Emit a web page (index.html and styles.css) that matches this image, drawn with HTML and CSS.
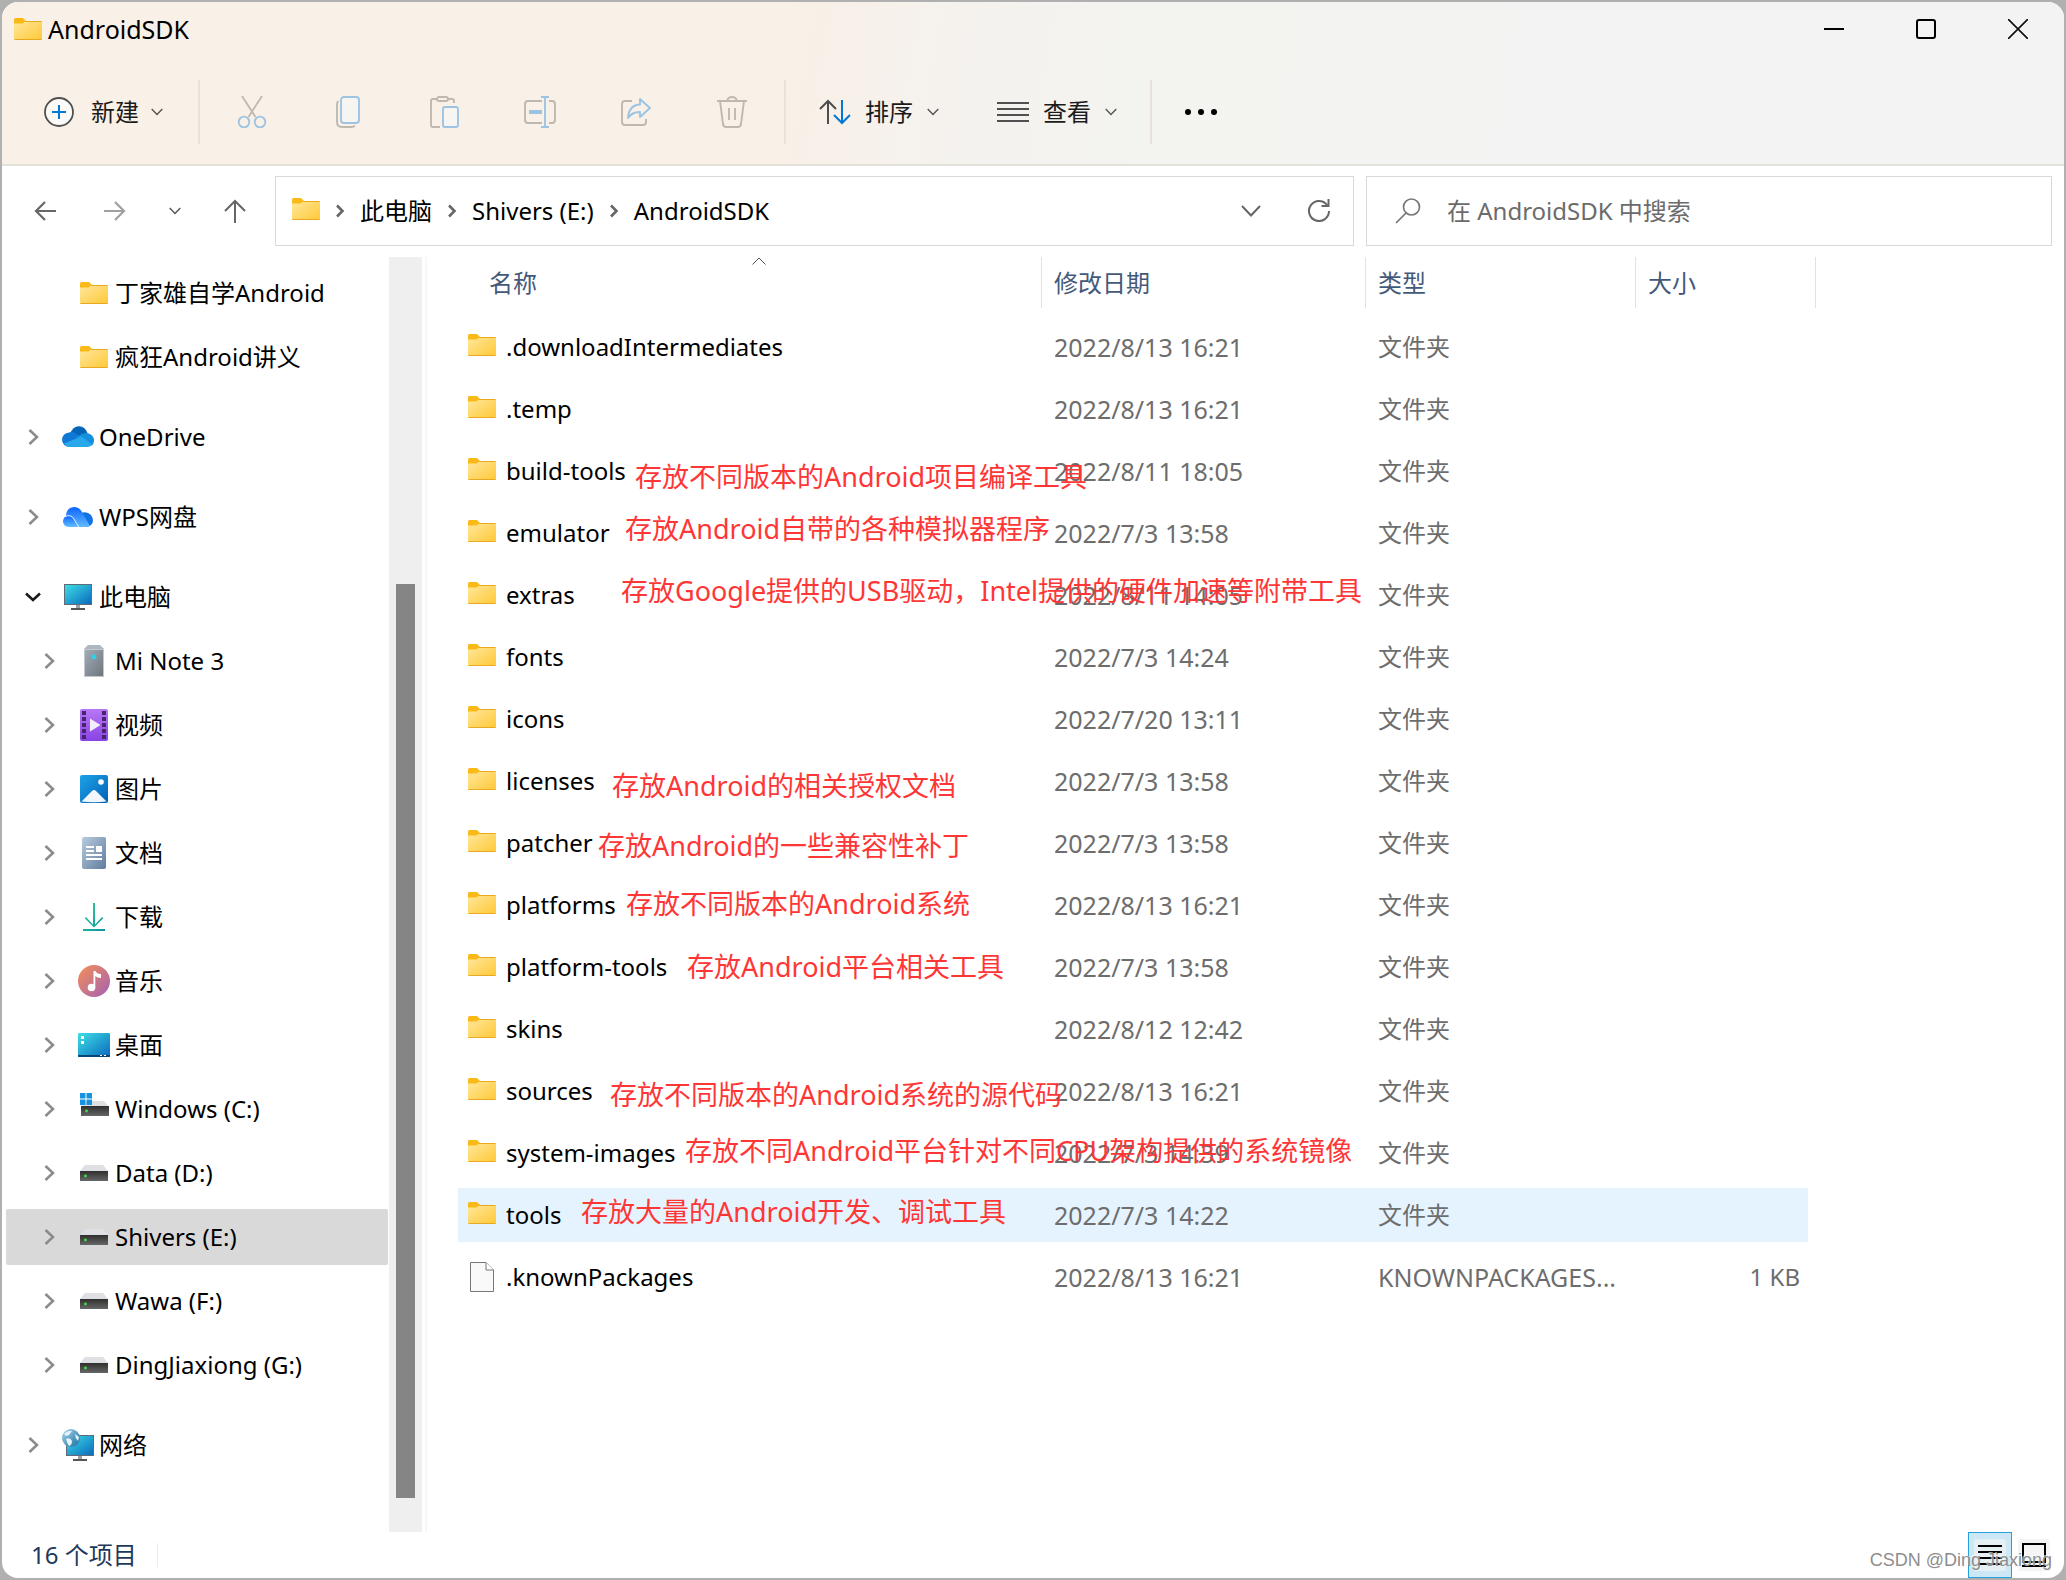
FILE: index.html
```html
<!DOCTYPE html>
<html lang="zh-CN">
<head>
<meta charset="utf-8">
<title>AndroidSDK</title>
<link rel="stylesheet" href="styles.css">
</head>
<body>
<svg class="sprite" width="0" height="0" aria-hidden="true">
  <defs>
    <linearGradient id="g-folder" x1="0" y1="0" x2="1" y2="1"><stop offset="0" stop-color="#ffe79c"/><stop offset="1" stop-color="#ffc937"/></linearGradient>
    <linearGradient id="g-screen" x1="0" y1="0" x2="1" y2="1"><stop offset="0" stop-color="#3ee0e6"/><stop offset="1" stop-color="#0a68bd"/></linearGradient>
    <linearGradient id="g-wps" x1="0" y1="0" x2="0" y2="1"><stop offset="0" stop-color="#0d63ff"/><stop offset="1" stop-color="#62bdff"/></linearGradient>
    <linearGradient id="g-phone" x1="0" y1="0" x2="1" y2="1"><stop offset="0" stop-color="#a3adb6"/><stop offset="1" stop-color="#6d757c"/></linearGradient>
    <linearGradient id="g-video" x1="0" y1="0" x2="0" y2="1"><stop offset="0" stop-color="#b877f6"/><stop offset="1" stop-color="#8a43e4"/></linearGradient>
    <linearGradient id="g-pic" x1="0" y1="0" x2="1" y2="1"><stop offset="0" stop-color="#1ba3ea"/><stop offset="1" stop-color="#0560b4"/></linearGradient>
    <linearGradient id="g-doc" x1="0" y1="0" x2="1" y2="1"><stop offset="0" stop-color="#b9cbdd"/><stop offset="1" stop-color="#607c9e"/></linearGradient>
    <linearGradient id="g-down" x1="0" y1="0" x2="1" y2="1"><stop offset="0" stop-color="#35cf92"/><stop offset="1" stop-color="#0b93a0"/></linearGradient>
    <linearGradient id="g-music" x1="0" y1="0" x2="1" y2="1"><stop offset="0" stop-color="#f59055"/><stop offset="1" stop-color="#a35fb5"/></linearGradient>
    <linearGradient id="g-drive" x1="0" y1="0" x2="0" y2="1"><stop offset="0" stop-color="#2f2f2f"/><stop offset="1" stop-color="#666"/></linearGradient>
    <linearGradient id="g-globe" x1="0" y1="0" x2="1" y2="1"><stop offset="0" stop-color="#a5d8ee"/><stop offset="1" stop-color="#1b6c9f"/></linearGradient>
  </defs>
  <symbol id="folder" viewBox="0 0 28 22">
    <path d="M0 1.500Q0 0 1.500 0H9L12 3L9 6H0Z" fill="#fbb917"/>
    <path d="M0 5.500H8.500L11.500 3H27Q28 3 28 4V21Q28 22 27 22H1Q0 22 0 21Z" fill="url(#g-folder)"/>
    <path d="M11 3.500H27.500M0.500 21.500H27.500" stroke="#e8a820" fill="none"/>
  </symbol>
  <symbol id="file" viewBox="0 0 24 30">
    <path d="M.5 .5H16L23.500 8V29.500H.5Z" fill="#f9f9f9" stroke="#777"/><path d="M16 .5V8H23.500" fill="#fff" stroke="#777"/>
  </symbol>
  <symbol id="chev-right" viewBox="0 0 16 16"><path d="M4.500 1L12 8L4.500 15" fill="none" stroke="#8a8a8a" stroke-width="2.500"/></symbol>
  <symbol id="chev-open" viewBox="0 0 16 16"><path d="M1 4.500L8 11L15 4.500" fill="none" stroke="#1a1a1a" stroke-width="2.600"/></symbol>
  <symbol id="chev-down" viewBox="0 0 12 8"><path d="M.7 1L6 6.600L11.300 1" fill="none" stroke="currentColor" stroke-width="1.400"/></symbol>
  <symbol id="crumb-sep" viewBox="0 0 10 14"><path d="M2 1.500L7.500 7L2 12.500" fill="none" stroke="#666" stroke-width="2.600"/></symbol>
  <symbol id="onedrive" viewBox="0 0 32 22">
    <path d="M8 8Q11 0 17 .2Q23 .5 25.500 7L19 12Z" fill="#0364b8"/>
    <path d="M8 21Q0 20 0 13.500Q.5 7.500 7 6.500Q12 5 16 9L24 14L8 21Z" fill="#0f78d4"/>
    <path d="M17 9.500Q21 6.500 25 7Q32 8.500 32 14.500Q32 18 29 20L14 11.500Z" fill="#1490df"/>
    <path d="M2 17.500L19.500 10.500L30 18.500Q28 21 25.500 21H8Q4 21 2 17.500Z" fill="#28a8ea"/>
  </symbol>
  <symbol id="wps" viewBox="0 0 30 20">
    <path d="M18 6Q24 4 28 8Q32 14 28 18Q26 20 22 20H14Z" fill="#1173e6"/>
    <path d="M3 8Q4 0 12 0Q17 .5 19 5L27 19Q25 20 22 20H6Z" fill="url(#g-wps)"/>
    <path d="M6 20Q0 19.500 0 14Q1 8 6.500 8.500Q10 9 12 13L15.500 20Z" fill="url(#g-wps)"/>
    <path d="M2 9.500Q8 7 11 12Q13.500 17 16 20" fill="none" stroke="#fff" stroke-width=".9"/>
  </symbol>
  <symbol id="pc" viewBox="0 0 28 26">
    <rect x=".5" y=".5" width="27" height="20" fill="url(#g-screen)" stroke="#5f6b76"/><path d="M12 21H16V24H12Z" fill="#9aa0a6"/><rect x="7" y="24" width="14" height="2" fill="#555"/>
  </symbol>
  <symbol id="phone" viewBox="0 0 20 32">
    <path d="M0 4L4 0H16L20 4V32H0Z" fill="#aeb7bf"/><rect x=".5" y="4.500" width="19" height="27" fill="url(#g-phone)" stroke="#c1c8ce"/><circle cx="10" cy="12" r="2.400" fill="#2ed3ea"/>
  </symbol>
  <symbol id="video" viewBox="0 0 28 32">
    <rect width="28" height="32" rx="2" fill="url(#g-video)"/>
    <path d="M2 2h4v4H2zM2 8h4v4H2zM2 14h4v4H2zM2 20h4v4H2zM2 26h4v4H2zM22 2h4v4h-4zM22 8h4v4h-4zM22 14h4v4h-4zM22 20h4v4h-4zM22 26h4v4h-4z" fill="#46246e"/>
    <path d="M10 9.500L20.500 16L10 22.500Z" fill="#f3effa"/>
  </symbol>
  <symbol id="pic" viewBox="0 0 28 28">
    <rect width="28" height="28" rx="2" fill="url(#g-pic)"/><circle cx="21" cy="7" r="2.800" fill="#fff"/><path d="M1.500 26.500L12 16Q14 14 16 16L26.500 26.500Q14 28 1.500 26.500Z" fill="#f1f7fd"/>
  </symbol>
  <symbol id="doc" viewBox="0 0 24 32">
    <rect width="24" height="32" rx="2" fill="url(#g-doc)"/><path d="M4 9h8v2H4zM4 13h8v2H4zM14 9h6v6h-6zM4 17h16v2H4zM4 21h16v2H4z" fill="#fff"/>
  </symbol>
  <symbol id="down" viewBox="0 0 22 28">
    <path d="M10 0h2v21.500l7-7.500 1.300 1.300L11 24.500 1.700 15.300 3 14l7 7.500zM0 26h22v2H0z" fill="url(#g-down)"/>
  </symbol>
  <symbol id="music" viewBox="0 0 32 32">
    <circle cx="16" cy="16" r="16" fill="url(#g-music)"/><circle cx="13.500" cy="22.500" r="3.800" fill="#fff"/><path d="M15.500 6H17.500Q18.500 9 23 9V13Q19 13 17.300 11V22.500H15.500Z" fill="#fff"/>
  </symbol>
  <symbol id="desktop" viewBox="0 0 32 24">
    <rect width="32" height="24" rx="1" fill="url(#g-screen)"/><path d="M0 22H32V23Q32 24 31 24H1Q0 24 0 23Z" fill="#0a4673"/><path d="M3 3h3v3H3zM3 8h3v3H3zM22 22h2v1h-2zM26 22h2v1h-2z" fill="#fff"/>
  </symbol>
  <symbol id="drive" viewBox="0 0 28 16">
    <path d="M5 0H23L28 6H0Z" fill="#dfe0e3"/><rect y="6" width="28" height="10" fill="url(#g-drive)"/><circle cx="5.500" cy="11" r="1.400" fill="#3fe03f"/>
  </symbol>
  <symbol id="drive-win" viewBox="0 0 29 24">
    <path d="M6 8H24L29 14H1Z" fill="#dfe0e3"/><rect x="1" y="13" width="28" height="10" fill="url(#g-drive)"/><circle cx="6.500" cy="18" r="1.400" fill="#3fe03f"/>
    <path d="M0 0h5.500v5.500H0zM6.500 0H12v5.500H6.500zM0 6.500h5.500V12H0zM6.500 6.500H12V12H6.500z" fill="#1593e0"/>
  </symbol>
  <symbol id="network" viewBox="0 0 32 32">
    <rect x="4.500" y="6.500" width="27" height="20" fill="url(#g-screen)" stroke="#5f6b76"/><path d="M16 27H20V30H16Z" fill="#9aa0a6"/><rect x="11" y="30" width="14" height="2" fill="#555"/>
    <circle cx="9" cy="9" r="9" fill="url(#g-globe)"/><path d="M2 5Q6 1 10 2L7 6L4 7ZM4 10Q8 8 10 12Q10 16 7 17Q5 14 4 10ZM13 5L17 8L16 12Q13 9 13 5Z" fill="#e5f3f8"/>
  </symbol>
</svg>

<div class="window">
  <header class="chrome">
    <div class="titlebar">
      <svg class="folder"><use href="#folder"/></svg>
      <h1 class="title">AndroidSDK</h1>
      <div class="window-controls">
        <button aria-label="最小化"><svg width="20" height="20"><path d="M0 10H20" stroke="#000" stroke-width="2"/></svg></button>
        <button aria-label="最大化"><svg width="20" height="20"><rect x="1" y="1" width="18" height="18" rx="2" fill="none" stroke="#000" stroke-width="2"/></svg></button>
        <button aria-label="关闭"><svg width="20" height="20"><path d="M0 0L20 20M20 0L0 20" stroke="#111" stroke-width="1.700"/></svg></button>
      </div>
    </div>
    <div class="toolbar">
      <button class="tool tool-new">
        <svg width="30" height="30"><circle cx="15" cy="15" r="14" fill="#fbfaf8" stroke="#505050" stroke-width="1.800"/><path d="M15 8V22M8 15H22" stroke="#0078d4" stroke-width="2"/></svg>
        <span>新建</span><svg class="mini"><use href="#chev-down"/></svg>
      </button>
      <span class="rule"></span>
      <button class="tool-icon" aria-label="剪切"><svg width="30" height="32" fill="none" stroke-width="1.800"><path d="M5 0L18.500 21M25 0L11.500 21" stroke="#bdb9b2"/><circle cx="7" cy="26" r="5.300" stroke="#9cc4e2"/><circle cx="23" cy="26" r="5.300" stroke="#9cc4e2"/></svg></button>
      <button class="tool-icon" aria-label="复制"><svg width="24" height="32" fill="none" stroke-width="1.900"><path d="M2.500 5Q1 6 1 8V26Q1 31 6 31H15Q18 31 19 29.500" stroke="#bdb9b2"/><rect x="5" y="1" width="18" height="26" rx="3" fill="#f7f5f1" stroke="#9cc4e2"/></svg></button>
      <button class="tool-icon" aria-label="粘贴"><svg width="30" height="32" fill="none" stroke-width="1.900"><path d="M8 3H4Q2 3 2 5V29Q2 31 4 31H11M18 3H23Q25 3 25 5V7" stroke="#bdb9b2"/><rect x="8" y="1" width="11" height="4" rx="2" stroke="#bdb9b2"/><rect x="14" y="11" width="15" height="20" rx="2" fill="#f7f5f1" stroke="#9cc4e2"/></svg></button>
      <button class="tool-icon" aria-label="重命名"><svg width="32" height="32" fill="none" stroke-width="1.900"><path d="M18 5H4Q1 5 1 8V24Q1 27 4 27H18M25 5H28Q31 5 31 8V24Q31 27 28 27H25" stroke="#bdb9b2"/><path d="M17 1H25M17 31H25M21 1V31" stroke="#9cc4e2"/><path d="M5 16H18" stroke="#9cc4e2" stroke-width="4"/></svg></button>
      <button class="tool-icon" aria-label="共享"><svg width="32" height="30" fill="none" stroke-width="1.900" stroke-linejoin="round"><path d="M12 4H5Q2 4 2 7V25Q2 28 5 28H23Q26 28 26 25V22" stroke="#bdb9b2"/><path d="M20 2L30 11L20 20V15Q12 15 8 21Q9 8 20 7.500Z" stroke="#9cc4e2"/></svg></button>
      <button class="tool-icon" aria-label="删除"><svg width="30" height="32" fill="none" stroke="#bdb9b2" stroke-width="1.900"><path d="M0 5H30M10 5Q11 1 15 1Q19 1 20 5M3 5L6 28Q6.500 31 9 31H21Q23.500 31 24 28L27 5M12 12V24M18 12V24"/></svg></button>
      <span class="rule"></span>
      <button class="tool">
        <svg width="32" height="26" fill="none" stroke-width="2"><path d="M9 25V2M1 10L9 2L17 10" stroke="#4d4d4d"/><path d="M23 1V24M15 16L23 24L31 16" stroke="#0078d4"/></svg>
        <span>排序</span><svg class="mini"><use href="#chev-down"/></svg>
      </button>
      <button class="tool">
        <svg width="32" height="22"><path d="M0 2H32M0 8H32M0 14H32M0 20H32" stroke="#505050" stroke-width="1.800"/></svg>
        <span>查看</span><svg class="mini"><use href="#chev-down"/></svg>
      </button>
      <span class="rule"></span>
      <button class="tool" aria-label="查看更多"><svg width="32" height="8"><circle cx="3" cy="4" r="3"/><circle cx="16" cy="4" r="3"/><circle cx="29" cy="4" r="3"/></svg></button>
    </div>
  </header>

  <div class="navbar">
    <div class="nav-buttons">
      <button class="nav-wide" aria-label="后退"><svg width="22" height="20" fill="none" stroke="#666" stroke-width="2.200"><path d="M22 10H2M11 1L2 10L11 19"/></svg></button>
      <button class="nav-wide" aria-label="前进"><svg width="22" height="20" fill="none" stroke="#a0a0a0" stroke-width="2.200"><path d="M0 10H20M11 1L20 10L11 19"/></svg></button>
      <button class="nav-slim" aria-label="最近浏览的位置"><svg class="mini"><use href="#chev-down"/></svg></button>
      <button class="nav-wide" aria-label="上移"><svg width="24" height="24" fill="none" stroke="#666" stroke-width="2"><path d="M12 24V2M2 12L12 2L22 12"/></svg></button>
    </div>
    <nav class="address" aria-label="地址">
      <svg class="folder"><use href="#folder"/></svg>
      <svg class="sep"><use href="#crumb-sep"/></svg><a href="#pc">此电脑</a>
      <svg class="sep"><use href="#crumb-sep"/></svg><a href="#e">Shivers (E:)</a>
      <svg class="sep"><use href="#crumb-sep"/></svg><a href="#sdk">AndroidSDK</a>
      <div class="address-tools">
        <button aria-label="以前的位置"><svg width="20" height="12" fill="none" stroke="#666" stroke-width="2"><path d="M1 1L10 10.500L19 1"/></svg></button>
        <button aria-label="刷新"><svg width="24" height="24" fill="none" stroke="#666" stroke-width="2"><path d="M20 6A10 10 0 1 0 22 12M21.500 0V7H14.500"/></svg></button>
      </div>
    </nav>
    <div class="search">
      <svg width="26" height="26" fill="none" stroke="#777" stroke-width="1.700"><circle cx="16.500" cy="9" r="8"/><path d="M11 15L1 25"/></svg>
      <input type="text" aria-label="搜索" placeholder="在 AndroidSDK 中搜索">
    </div>
  </div>

  <div class="body">
    <nav class="tree" aria-label="导航窗格">
      <a class="node sub" href="#t1"><span class="twist"></span><span class="ico"><svg width="28" height="22"><use href="#folder"/></svg></span>丁家雄自学Android</a>
      <a class="node sub" href="#t2"><span class="twist"></span><span class="ico"><svg width="28" height="22"><use href="#folder"/></svg></span>疯狂Android讲义</a>
      <a class="node top" href="#t3"><svg class="twist"><use href="#chev-right"/></svg><span class="ico"><svg width="32" height="22"><use href="#onedrive"/></svg></span>OneDrive</a>
      <a class="node top" href="#t4"><svg class="twist"><use href="#chev-right"/></svg><span class="ico"><svg width="30" height="20"><use href="#wps"/></svg></span>WPS网盘</a>
      <a class="node top" href="#t5"><svg class="twist"><use href="#chev-open"/></svg><span class="ico"><svg width="28" height="26"><use href="#pc"/></svg></span>此电脑</a>
      <a class="node sub" href="#t6"><svg class="twist"><use href="#chev-right"/></svg><span class="ico"><svg width="20" height="32"><use href="#phone"/></svg></span>Mi Note 3</a>
      <a class="node sub" href="#t7"><svg class="twist"><use href="#chev-right"/></svg><span class="ico"><svg width="28" height="32"><use href="#video"/></svg></span>视频</a>
      <a class="node sub" href="#t8"><svg class="twist"><use href="#chev-right"/></svg><span class="ico"><svg width="28" height="28"><use href="#pic"/></svg></span>图片</a>
      <a class="node sub" href="#t9"><svg class="twist"><use href="#chev-right"/></svg><span class="ico"><svg width="24" height="32"><use href="#doc"/></svg></span>文档</a>
      <a class="node sub" href="#t10"><svg class="twist"><use href="#chev-right"/></svg><span class="ico"><svg width="22" height="28"><use href="#down"/></svg></span>下载</a>
      <a class="node sub" href="#t11"><svg class="twist"><use href="#chev-right"/></svg><span class="ico"><svg width="32" height="32"><use href="#music"/></svg></span>音乐</a>
      <a class="node sub" href="#t12"><svg class="twist"><use href="#chev-right"/></svg><span class="ico"><svg width="32" height="24"><use href="#desktop"/></svg></span>桌面</a>
      <a class="node sub" href="#t13"><svg class="twist"><use href="#chev-right"/></svg><span class="ico"><svg width="29" height="32" viewBox="0 0 29 32"><use href="#drive-win" width="29" height="24"/></svg></span>Windows (C:)</a>
      <a class="node sub" href="#t14"><svg class="twist"><use href="#chev-right"/></svg><span class="ico"><svg width="28" height="16"><use href="#drive"/></svg></span>Data (D:)</a>
      <a class="node sub current" href="#t15"><svg class="twist"><use href="#chev-right"/></svg><span class="ico"><svg width="28" height="16"><use href="#drive"/></svg></span>Shivers (E:)</a>
      <a class="node sub" href="#t16"><svg class="twist"><use href="#chev-right"/></svg><span class="ico"><svg width="28" height="16"><use href="#drive"/></svg></span>Wawa (F:)</a>
      <a class="node sub" href="#t17"><svg class="twist"><use href="#chev-right"/></svg><span class="ico"><svg width="28" height="16"><use href="#drive"/></svg></span>DingJiaxiong (G:)</a>
      <a class="node top" href="#t18"><svg class="twist"><use href="#chev-right"/></svg><span class="ico"><svg width="32" height="32"><use href="#network"/></svg></span>网络</a>
    </nav>
    <div class="scrollbar" aria-hidden="true"><span class="before"></span><span class="thumb"></span><span class="after"></span></div>
    <main class="files">
      <table>
        <colgroup><col class="c-name"><col class="c-date"><col class="c-type"><col class="c-size"></colgroup>
        <thead>
          <tr>
            <th scope="col" aria-sort="ascending"><div class="head first">名称<svg class="sorted" width="14" height="8" fill="none" stroke="#555"><path d="M.5 7.500L7 1L13.500 7.500"/></svg></div></th>
            <th scope="col"><div class="head">修改日期</div></th>
            <th scope="col"><div class="head">类型</div></th>
            <th scope="col"><div class="head">大小</div></th>
          </tr>
        </thead>
        <tbody>
          <tr><td><span class="name"><svg class="folder"><use href="#folder"/></svg>.downloadIntermediates</span></td><td class="wide">2022/8/13 16:21</td><td>文件夹</td><td></td></tr>
          <tr><td><span class="name"><svg class="folder"><use href="#folder"/></svg>.temp</span></td><td class="wide">2022/8/13 16:21</td><td>文件夹</td><td></td></tr>
          <tr><td><span class="name"><svg class="folder"><use href="#folder"/></svg>build-tools</span></td><td class="wide">2022/8/11 18:05</td><td>文件夹</td><td></td></tr>
          <tr><td><span class="name"><svg class="folder"><use href="#folder"/></svg>emulator</span></td><td class="wide">2022/7/3 13:58</td><td>文件夹</td><td></td></tr>
          <tr><td><span class="name"><svg class="folder"><use href="#folder"/></svg>extras</span></td><td class="wide">2022/8/11 14:05</td><td>文件夹</td><td></td></tr>
          <tr><td><span class="name"><svg class="folder"><use href="#folder"/></svg>fonts</span></td><td class="wide">2022/7/3 14:24</td><td>文件夹</td><td></td></tr>
          <tr><td><span class="name"><svg class="folder"><use href="#folder"/></svg>icons</span></td><td class="wide">2022/7/20 13:11</td><td>文件夹</td><td></td></tr>
          <tr><td><span class="name"><svg class="folder"><use href="#folder"/></svg>licenses</span></td><td class="wide">2022/7/3 13:58</td><td>文件夹</td><td></td></tr>
          <tr><td><span class="name"><svg class="folder"><use href="#folder"/></svg>patcher</span></td><td class="wide">2022/7/3 13:58</td><td>文件夹</td><td></td></tr>
          <tr><td><span class="name"><svg class="folder"><use href="#folder"/></svg>platforms</span></td><td class="wide">2022/8/13 16:21</td><td>文件夹</td><td></td></tr>
          <tr><td><span class="name"><svg class="folder"><use href="#folder"/></svg>platform-tools</span></td><td class="wide">2022/7/3 13:58</td><td>文件夹</td><td></td></tr>
          <tr><td><span class="name"><svg class="folder"><use href="#folder"/></svg>skins</span></td><td class="wide">2022/8/12 12:42</td><td>文件夹</td><td></td></tr>
          <tr><td><span class="name"><svg class="folder"><use href="#folder"/></svg>sources</span></td><td class="wide">2022/8/13 16:21</td><td>文件夹</td><td></td></tr>
          <tr><td><span class="name"><svg class="folder"><use href="#folder"/></svg>system-images</span></td><td class="wide">2022/7/3 14:39</td><td>文件夹</td><td></td></tr>
          <tr class="hover"><td><span class="name"><svg class="folder"><use href="#folder"/></svg>tools</span></td><td class="wide">2022/7/3 14:22</td><td>文件夹</td><td></td></tr>
          <tr><td><span class="name"><svg class="file"><use href="#file"/></svg>.knownPackages</span></td><td class="wide">2022/8/13 16:21</td><td class="wide">KNOWNPACKAGES...</td><td class="size">1 KB</td></tr>
        </tbody>
      </table>
      <div class="notes">
        <p class="note n-build-tools">存放不同版本的Android项目编译工具</p>
        <p class="note n-emulator">存放Android自带的各种模拟器程序</p>
        <p class="note n-extras">存放Google提供的USB驱动，Intel提供的硬件加速等附带工具</p>
        <p class="note n-licenses">存放Android的相关授权文档</p>
        <p class="note n-patcher">存放Android的一些兼容性补丁</p>
        <p class="note n-platforms">存放不同版本的Android系统</p>
        <p class="note n-platform-tools">存放Android平台相关工具</p>
        <p class="note n-sources">存放不同版本的Android系统的源代码</p>
        <p class="note n-system-images">存放不同Android平台针对不同CPU架构提供的系统镜像</p>
        <p class="note n-tools">存放大量的Android开发、调试工具</p>
      </div>
    </main>
  </div>

  <footer class="status">
    <span class="count">16 个项目</span>
    <div class="views">
      <button class="view active" aria-label="详细信息"><svg width="32" height="32"><rect width="32" height="32" rx="3" fill="#e6eff4"/><path d="M4 7H28M4 13H28M4 19H28M4 25H28" stroke="#000" stroke-width="2"/></svg></button>
      <button class="view" aria-label="大图标"><svg width="32" height="32"><rect width="32" height="32" rx="3" fill="#f5f5f5"/><rect x="5" y="5" width="22" height="18" fill="none" stroke="#000" stroke-width="2"/><path d="M4 27H28" stroke="#000" stroke-width="2"/></svg></button>
    </div>
    <span class="watermark">CSDN @Ding Jiaxiong</span>
  </footer>
</div>
</body>
</html>
```

FILE: styles.css
```css
* { box-sizing: border-box; }

body {
  margin: 0;
  padding: 2px;
  background: #b0b0b0;
  color: #000;
  font-family: "Noto Sans", "Noto Sans CJK SC", sans-serif;
  font-size: 24px;
  line-height: 32px;
}

button {
  display: flex;
  align-items: center;
  justify-content: center;
  padding: 0;
  border: 0;
  background: none;
  color: inherit;
  font: inherit;
}

a { color: inherit; text-decoration: none; }
svg { display: block; flex: none; }
.sprite { position: absolute; }
.folder { width: 28px; height: 22px; }
.file { width: 28px; height: 30px; }
.mini { width: 12px; height: 8px; color: #555; }

.window {
  display: flex;
  flex-direction: column;
  min-height: calc(100vh - 4px);
  overflow: hidden;
  border-radius: 16px;
  background: #fff;
}

/* title bar and command bar */
.chrome {
  border-bottom: 2px solid #e4e0da;
  background: linear-gradient(100deg, #f9f0e7 0%, #f9f0e7 38%, #f5f2ee 46%, #f3f3ef 55%, #f3f3f3 75%);
}
.titlebar {
  display: flex;
  align-items: center;
  height: 54px;
  padding-left: 12px;
}
.title {
  margin: 0 0 0 6px;
  font-size: 25px;
  font-weight: 400;
}
.window-controls { display: flex; margin-left: auto; }
.window-controls button { width: 92px; height: 54px; }

.toolbar {
  display: flex;
  align-items: center;
  height: 108px;
  padding: 4px 0 0 12px;
  color: #1b1b1b;
}
.rule {
  width: 2px;
  height: 64px;
  margin: 0 4px;
  background: #e8e2da;
}
.tool { gap: 14px; height: 64px; padding: 0 29px; }
.tool-new { gap: 17px; padding: 0 31px 0 30px; }
.tool-new .mini { margin-left: -5px; }
.tool-icon { width: 96px; height: 64px; }

/* navigation row */
.navbar {
  display: grid;
  grid-template-columns: auto minmax(0, 1079fr) minmax(0, 686fr);
  column-gap: 12px;
  padding: 10px 12px 11px 8px;
}
.nav-buttons { display: flex; align-items: center; margin-right: -7px; }
.nav-wide { width: 70px; height: 70px; }
.nav-slim { width: 50px; height: 70px; }
.address, .search {
  display: flex;
  align-items: center;
  height: 70px;
  border: 1px solid #d9d9d9;
}
.address { padding: 0 0 0 16px; }
.address .folder, .name .folder { margin-bottom: 4px; }
.sep { width: 10px; height: 14px; margin: 0 15px; }
.address-tools { display: flex; margin-left: auto; }
.address-tools button { width: 68px; height: 68px; }
.search { gap: 26px; padding: 0 28px; }
.search input {
  flex: 1;
  min-width: 0;
  padding: 0;
  border: 0;
  outline: 0;
  background: none;
  font: inherit;
}
.search input::placeholder { color: #6b6b6b; opacity: 1; }

/* folder tree */
.body { display: flex; flex: 1; }
.tree {
  display: flex;
  flex-direction: column;
  gap: 8px;
  width: 387px;
  padding: 8px 1px 8px 4px;
}
.node {
  display: flex;
  align-items: center;
  height: 56px;
  padding-left: 19px;
  border-radius: 2px;
  white-space: nowrap;
}
.sub { padding-left: 35px; }
.top { margin-top: 16px; }
.current { background: #d9d9d9; }
.twist { width: 16px; height: 16px; }
.ico {
  display: flex;
  align-items: center;
  justify-content: center;
  width: 32px;
  margin: 0 5px 0 21px;
}

.scrollbar {
  display: flex;
  flex-direction: column;
  align-items: center;
  width: 33px;
  margin-right: 3px;
  background: #efefef;
}
.before { flex: 327; }
.thumb { flex: 914; width: 19px; background: #858585; }
.after { flex: 34; }

/* file list */
.files {
  position: relative;
  flex: 1;
  padding-left: 31px;
  border-left: 2px solid #f7f7f7;
}
table { width: 1358px; table-layout: fixed; border-spacing: 0; }
.c-name { width: 584px; }
.c-date { width: 324px; }
.c-type { width: 270px; }
.c-size { width: 180px; }
th {
  height: 59px;
  padding: 0;
  color: #44597a;
  font-weight: 400;
  text-align: left;
  vertical-align: top;
}
.head {
  position: relative;
  height: 51px;
  padding: 10px 0 0 12px;
  border-right: 1px solid #e2e2e2;
}
.first { padding-left: 31px; }
.sorted { position: absolute; top: 0; left: 294px; }
td {
  height: 62px;
  padding: 0 0 0 12px;
  border: solid transparent;
  border-width: 4px 0;
  background-clip: padding-box;
  color: #6d6d6d;
  white-space: nowrap;
}
td:first-child { padding-left: 10px; color: #000; }
td:last-child { border-right-width: 8px; }
.name { display: flex; align-items: center; gap: 10px; }
.wide { font-size: 25px; }
.size { padding-right: 8px; text-align: right; }
.hover td { background-color: #e5f3ff; }

/* red remarks laid freely over the list */
.note {
  position: absolute;
  margin: 0;
  color: #ff3636;
  font-size: 27px;
  line-height: 36px;
  white-space: nowrap;
}
.n-build-tools { left: 208px; top: 202px; }
.n-emulator { left: 198px; top: 254px; }
.n-extras { left: 194px; top: 316px; }
.n-licenses { left: 185px; top: 511px; }
.n-patcher { left: 171px; top: 571px; }
.n-platforms { left: 199px; top: 629px; }
.n-platform-tools { left: 260px; top: 692px; }
.n-sources { left: 183px; top: 820px; }
.n-system-images { left: 258px; top: 876px; }
.n-tools { left: 154px; top: 937px; }

/* status bar */
.status {
  position: relative;
  display: flex;
  align-items: center;
  height: 46px;
  padding: 0 8px 0 29px;
  color: #1e395b;
}
.count { padding-right: 20px; border-right: 1px solid #ececec; line-height: 24px; }
.views { display: flex; margin-left: auto; }
.view { width: 44px; height: 46px; border: 1px solid transparent; }
.active { border-color: #26a0da; background: #cce8f6; }
.watermark {
  position: absolute;
  right: 12px;
  bottom: 8px;
  color: #8e8e8e;
  font-family: "Liberation Sans", sans-serif;
  font-size: 18px;
  line-height: 20px;
  text-shadow: -1px -1px 0 #ffffff99;
}
```
